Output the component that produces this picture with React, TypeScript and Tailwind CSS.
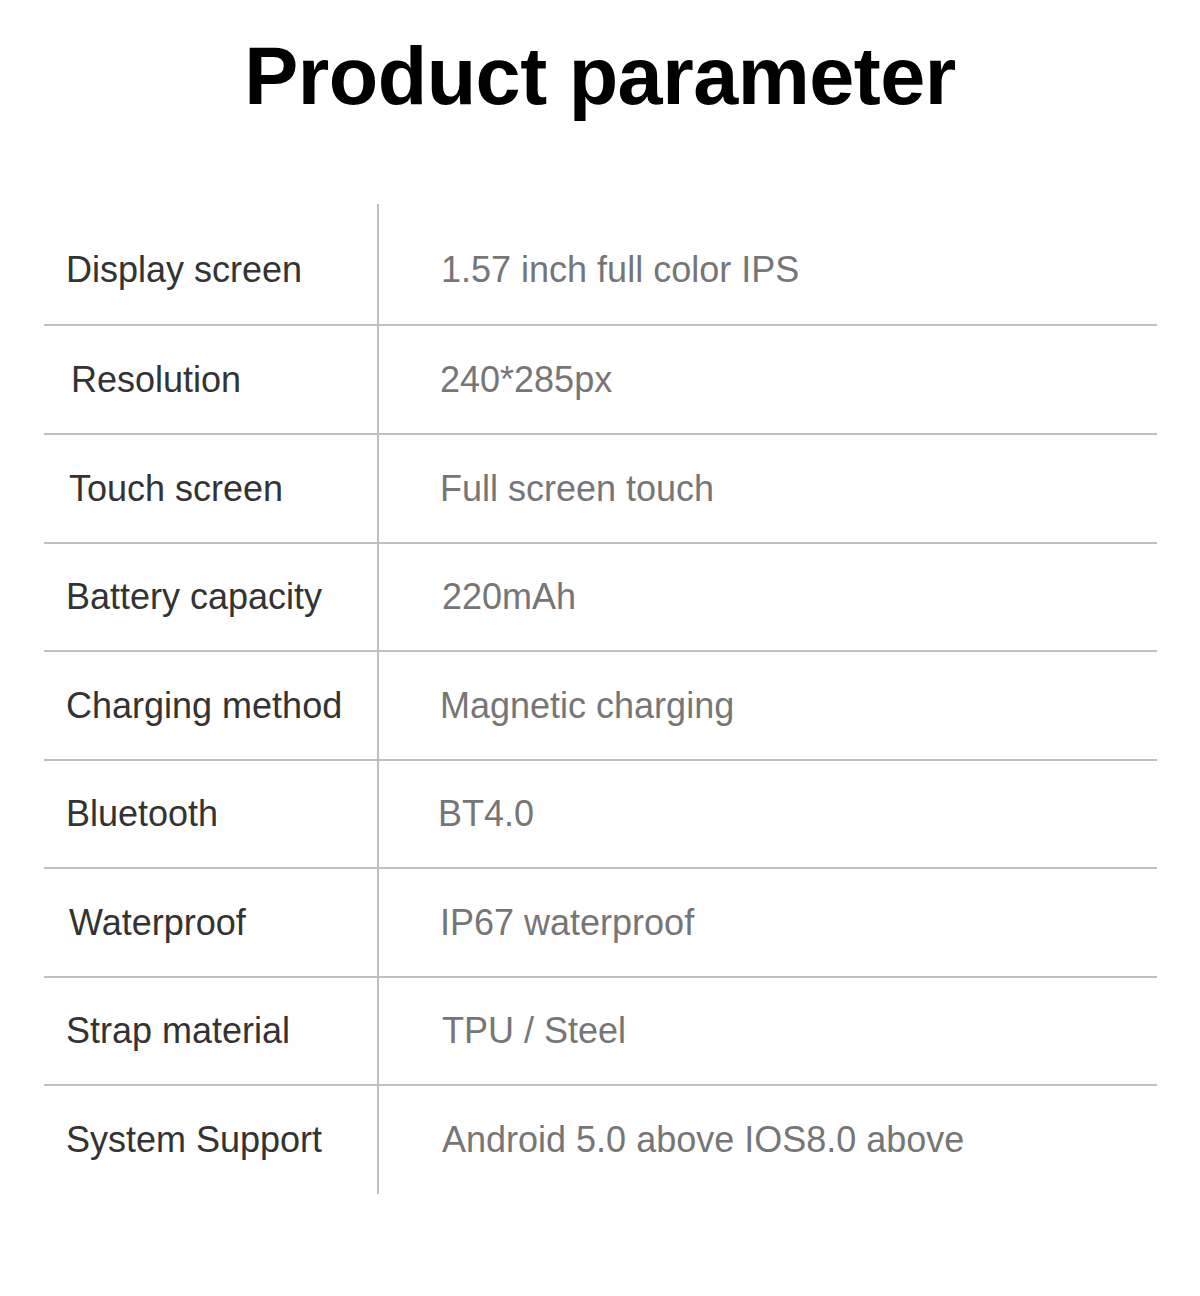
import React from "react";

const rows: { label: string; value: string; lx: string; vx: string; h: string }[] = [
  { label: "Display screen", value: "1.57 inch full color IPS", lx: "pl-[22px]", vx: "pl-[62px]", h: "h-[122px] pt-[12px]" },
  { label: "Resolution", value: "240*285px", lx: "pl-[27px]", vx: "pl-[61px]", h: "h-[109px]" },
  { label: "Touch screen", value: "Full screen touch", lx: "pl-[25px]", vx: "pl-[61px]", h: "h-[109px]" },
  { label: "Battery capacity", value: "220mAh", lx: "pl-[22px]", vx: "pl-[63px]", h: "h-[108px]" },
  { label: "Charging method", value: "Magnetic charging", lx: "pl-[22px]", vx: "pl-[61px]", h: "h-[109px]" },
  { label: "Bluetooth", value: "BT4.0", lx: "pl-[22px]", vx: "pl-[59px]", h: "h-[108px]" },
  { label: "Waterproof", value: "IP67 waterproof", lx: "pl-[25px]", vx: "pl-[61px]", h: "h-[109px]" },
  { label: "Strap material", value: "TPU / Steel", lx: "pl-[22px]", vx: "pl-[63px]", h: "h-[108px]" },
  { label: "System Support", value: "Android 5.0 above IOS8.0 above", lx: "pl-[22px]", vx: "pl-[63px]", h: "h-[108px]" },
];

const App = () => {
  return (
    <div className="w-[1200px] h-[1296px] bg-white font-['Liberation_Sans',Arial,sans-serif]">
      <h1 className="pt-[28px] text-center text-[81px] leading-[96px] font-bold text-black tracking-[-0.5px]">
        Product parameter
      </h1>
      <div className="mt-[80px] mx-[44px] w-[1113px]">
        {rows.map((r, i) => (
          <div
            key={r.label}
            className={
              "flex " + r.h + " " + (i < rows.length - 1 ? "border-b-2 border-[#c0c0c0]" : "")
            }
          >
            <div
              className={
                "w-[335px] shrink-0 flex items-center border-r-2 border-[#c0c0c0] text-[36px] text-[#333333] " +
                (i === 0 ? "pt-[12px] -mt-[12px] " : "") +
                r.lx
              }
            >
              {r.label}
            </div>
            <div className={"flex items-center text-[36px] text-[#767676] " + r.vx}>
              {r.value}
            </div>
          </div>
        ))}
      </div>
    </div>
  );
};

export default App;
